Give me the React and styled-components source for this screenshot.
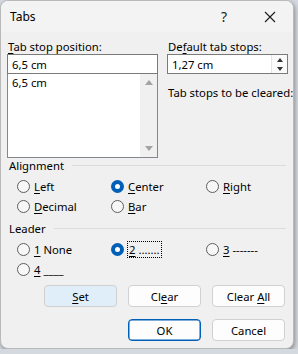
import React from 'react'
import styled, { createGlobalStyle } from 'styled-components'

const Global = createGlobalStyle`
  html, body {
    margin: 0;
    background: #d4d9df;
  }
  body {
    font-family: "Noto Sans", "Open Sans", sans-serif;
    font-size: 11.3px;
    color: #000;
  }
`

const Window = styled.div`
  width: 294px;
  height: 349px;
  box-sizing: border-box;
  background: #f0f0f0;
  border: 1px solid #b9b9b9;
  border-radius: 8px;
  box-shadow: 1px 2px 4px rgba(0, 0, 0, 0.35);
  display: flex;
  flex-direction: column;
  overflow: hidden;
`

const TitleBar = styled.div`
  height: 31px;
  display: flex;
  align-items: center;
  padding-left: 9px;
  background: #f3f3f3;
  font-size: 12px;
  span { flex: 1; }
`

const TitleButton = styled.div`
  width: 46px;
  height: 31px;
  display: flex;
  align-items: center;
  justify-content: center;
  font-size: 14px;
  color: #1b1b1b;
`

const Body = styled.div`
  padding: 7px 5px 0 6px;
  display: flex;
  flex-direction: column;
`

const Top = styled.div`
  display: grid;
  grid-template-columns: 151px 121px;
  column-gap: 9px;
`

const Label = styled.div`
  line-height: 15px;
  height: 15px;
  padding-left: 1px;
  white-space: nowrap;
`

const U = styled.span`
  text-decoration: underline;
  text-underline-offset: 2px;
`

const Input = styled.div`
  height: 20px;
  box-sizing: border-box;
  border: 1px solid #7a7a7a;
  background: #fff;
  padding-left: 4px;
  line-height: 17px;
  display: flex;
  align-items: center;
  span { flex: 1; }
`

const List = styled.div`
  height: 84px;
  box-sizing: border-box;
  border: 1px solid #828790;
  border-top: none;
  background: #fff;
  display: flex;
`

const ListItems = styled.div`
  flex: 1;
  padding: 1px 4px;
  line-height: 15px;
`

const ScrollBar = styled.div`
  width: 17px;
  background: #f0f0f0;
  display: flex;
  flex-direction: column;
  justify-content: space-between;
  align-items: center;
  padding: 6px 0;
`

const Tri = styled.div`
  width: 0;
  height: 0;
  border-left: 4px solid transparent;
  border-right: 4px solid transparent;
  ${p => p.$down ? 'border-top: 5px solid #a3a3a3;' : 'border-bottom: 5px solid #a3a3a3;'}
`

const Spin = styled.div`
  width: 15px;
  height: 18px;
  display: flex;
  flex-direction: column;
  justify-content: space-around;
  align-items: center;
  border-left: 1px solid #e4e4e4;
  background: #fafafa;
`

const SmallTri = styled.div`
  width: 0;
  height: 0;
  border-left: 3px solid transparent;
  border-right: 3px solid transparent;
  ${p => p.$down ? 'border-top: 4px solid #333;' : 'border-bottom: 4px solid #333;'}
`

const RightCol = styled.div`
  display: flex;
  flex-direction: column;
`

const ClearedLabel = styled(Label)`
  margin-top: 11px;
`

const Group = styled.div`
  margin-top: ${p => p.$top}px;
`

const GroupHead = styled.div`
  display: flex;
  align-items: center;
  gap: 8px;
  height: 16px;
  padding-left: 2px;
  &::after {
    content: '';
    flex: 1;
    border-top: 1px solid #dcdcdc;
    margin-right: 2px;
  }
`

const RadioGrid = styled.div`
  display: grid;
  grid-template-columns: 94px 95px 80px;
  row-gap: 4px;
  padding: ${p => p.$pad};
`

const RadioItem = styled.div`
  display: flex;
  align-items: center;
  gap: 4px;
  height: 16px;
  white-space: nowrap;
`

const Circle = styled.div`
  width: 13px;
  height: 13px;
  box-sizing: border-box;
  border-radius: 50%;
  flex: none;
  ${p => p.$on
    ? 'background: #005fb8; border: none; display: flex; align-items: center; justify-content: center;'
    : 'background: #f7f7f7; border: 1px solid #5e5e5e;'}
  &::after {
    content: '';
    display: ${p => p.$on ? 'block' : 'none'};
    width: 5px;
    height: 5px;
    border-radius: 50%;
    background: #fff;
  }
`

const Focus = styled.span`
  outline: 1px dotted #000;
  outline-offset: 0px;
  padding: 0 1px;
`

const Buttons = styled.div`
  display: grid;
  grid-template-columns: repeat(3, 73px);
  column-gap: 11px;
  row-gap: 12px;
  justify-content: end;
  padding-right: 3px;
  margin-top: ${p => p.$top}px;
`

const Button = styled.div`
  height: 22px;
  box-sizing: border-box;
  border-radius: 4px;
  display: flex;
  align-items: center;
  justify-content: center;
  background: ${p => p.$focus ? '#e0eef9' : '#fdfdfd'};
  border: 1px solid ${p => p.$primary ? '#005fb8' : '#d0d0d0'};
  ${p => p.$primary && 'box-shadow: inset 0 0 0 0.5px #005fb8;'}
  grid-column: ${p => p.$col || 'auto'};
  white-space: pre;
`

const Radio = ({ on, children, focus }) => (
  <RadioItem>
    <Circle $on={on} />
    {focus ? <Focus>{children}</Focus> : <span>{children}</span>}
  </RadioItem>
)

export default function App() {
  return (
    <>
      <Global />
      <Window>
        <TitleBar>
          <span>Tabs</span>
          <TitleButton>?</TitleButton>
          <TitleButton>
            <svg width="12" height="12" viewBox="0 0 12 12">
              <path d="M1 1 L11 11 M11 1 L1 11" stroke="#1b1b1b" strokeWidth="1.1" />
            </svg>
          </TitleButton>
        </TitleBar>
        <Body>
          <Top>
            <div>
              <Label><U>T</U>ab stop position:</Label>
              <Input><span>6,5 cm</span></Input>
              <List>
                <ListItems>6,5 cm</ListItems>
                <ScrollBar>
                  <Tri />
                  <Tri $down />
                </ScrollBar>
              </List>
            </div>
            <RightCol>
              <Label>De<U>f</U>ault tab stops:</Label>
              <Input>
                <span>1,27 cm</span>
                <Spin>
                  <SmallTri />
                  <SmallTri $down />
                </Spin>
              </Input>
              <ClearedLabel>Tab stops to be cleared:</ClearedLabel>
            </RightCol>
          </Top>

          <Group $top={-1}>
            <GroupHead>Alignment</GroupHead>
            <RadioGrid $pad="5px 0 0 10px">
              <Radio><U>L</U>eft</Radio>
              <Radio on><U>C</U>enter</Radio>
              <Radio><U>R</U>ight</Radio>
              <Radio><U>D</U>ecimal</Radio>
              <Radio><U>B</U>ar</Radio>
            </RadioGrid>
          </Group>

          <Group $top={6}>
            <GroupHead>Leader</GroupHead>
            <RadioGrid $pad="5px 0 0 10px">
              <Radio><U>1</U> None</Radio>
              <Radio on focus><U>2</U> .......</Radio>
              <Radio><U>3</U> -------</Radio>
              <Radio><U>4</U> ____</Radio>
            </RadioGrid>
          </Group>

          <Buttons $top={8}>
            <Button $focus><span><U>S</U>et</span></Button>
            <Button><span>Cl<U>e</U>ar</span></Button>
            <Button><span>Clear <U>A</U>ll</span></Button>
            <Button $primary $col={2}>OK</Button>
            <Button>Cancel</Button>
          </Buttons>
        </Body>
      </Window>
    </>
  )
}
